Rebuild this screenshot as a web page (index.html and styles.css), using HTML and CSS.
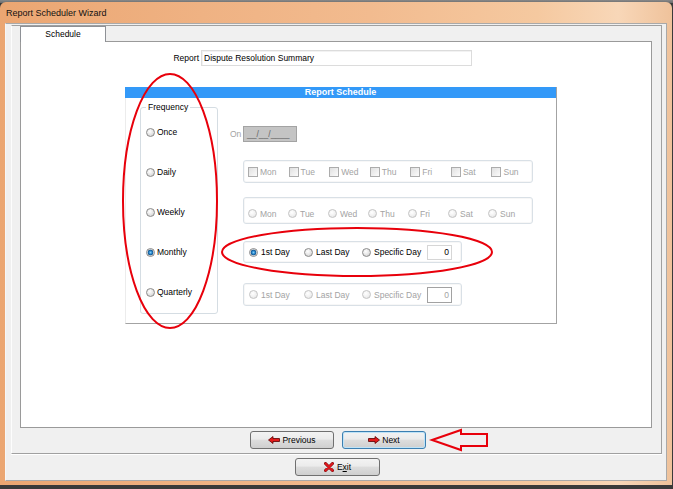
FILE: index.html
```html
<!DOCTYPE html>
<html>
<head>
<meta charset="utf-8">
<title>Report Scheduler Wizard</title>
<link rel="stylesheet" href="styles.css">
</head>
<body>
<div class="window">
  <div class="titlebar">Report Scheduler Wizard</div>
  <div class="client">
    <div class="upper">
      <div class="tabs"><div class="tab">Schedule</div></div>
      <div class="panel">
        <div class="report-row">
          <span class="report-label">Report</span>
          <div class="textbox">Dispute Resolution Summary</div>
        </div>
        <div class="group">
          <div class="group-header">Report Schedule</div>
          <div class="group-body">
            <div class="freq">
              <span class="freq-label">Frequency</span>
              <div class="freq-list">
                <div class="opt"><span class="radio"></span>Once</div>
                <div class="opt"><span class="radio"></span>Daily</div>
                <div class="opt"><span class="radio"></span>Weekly</div>
                <div class="opt"><span class="radio on"></span>Monthly</div>
                <div class="opt"><span class="radio"></span>Quarterly</div>
              </div>
            </div>
            <div class="options">
              <div class="on-row"><span class="on-label">On</span><span class="datebox">__/__/____</span></div>
              <div class="box days">
                <div class="ck-item"><span class="check"></span>Mon</div>
                <div class="ck-item"><span class="check"></span>Tue</div>
                <div class="ck-item"><span class="check"></span>Wed</div>
                <div class="ck-item"><span class="check"></span>Thu</div>
                <div class="ck-item"><span class="check"></span>Fri</div>
                <div class="ck-item"><span class="check"></span>Sat</div>
                <div class="ck-item"><span class="check"></span>Sun</div>
              </div>
              <div class="box weekly">
                <div class="rd-item"><span class="radio dis"></span>Mon</div>
                <div class="rd-item"><span class="radio dis"></span>Tue</div>
                <div class="rd-item"><span class="radio dis"></span>Wed</div>
                <div class="rd-item"><span class="radio dis"></span>Thu</div>
                <div class="rd-item"><span class="radio dis"></span>Fri</div>
                <div class="rd-item"><span class="radio dis"></span>Sat</div>
                <div class="rd-item"><span class="radio dis"></span>Sun</div>
              </div>
              <div class="box monthly">
                <div class="m-item first"><span class="radio on"></span>1st Day</div>
                <div class="m-item last"><span class="radio"></span>Last Day</div>
                <div class="m-item spec"><span class="radio"></span>Specific Day</div>
                <div class="num">0</div>
              </div>
              <div class="box quarterly">
                <div class="m-item first"><span class="radio dis"></span>1st Day</div>
                <div class="m-item last"><span class="radio dis"></span>Last Day</div>
                <div class="m-item spec"><span class="radio dis"></span>Specific Day</div>
                <div class="num">0</div>
              </div>
            </div>
          </div>
        </div>
      </div>
      <div class="nav">
        <div class="btn">
          <svg class="arrow" width="12" height="8" viewBox="0 0 12 8"><polygon points="0.5,4 5,0.5 5,2.5 11.5,2.5 11.5,5.5 5,5.5 5,7.5" fill="#e21b1b" stroke="#5a0000" stroke-width="0.8"/></svg>
          <span>Previous</span>
        </div>
        <div class="btn focus">
          <svg class="arrow" width="12" height="8" viewBox="0 0 12 8"><polygon points="11.5,4 7,0.5 7,2.5 0.5,2.5 0.5,5.5 7,5.5 7,7.5" fill="#e21b1b" stroke="#5a0000" stroke-width="0.8"/></svg>
          <span>Next</span>
        </div>
      </div>
    </div>
    <div class="exit-row">
      <div class="btn exit">
        <svg width="10" height="10" viewBox="0 0 10 10"><path d="M1.5,1.5 L8.5,8.5 M8.5,1.5 L1.5,8.5" stroke="#7a0a0a" stroke-width="3" stroke-linecap="round"/><path d="M1.5,1.5 L8.5,8.5 M8.5,1.5 L1.5,8.5" stroke="#e0191f" stroke-width="1.9" stroke-linecap="round"/></svg>
        <span>E<u>x</u>it</span>
      </div>
    </div>
  </div>
</div>
<svg class="annot" width="673" height="489" viewBox="0 0 673 489">
  <ellipse cx="170" cy="201" rx="47" ry="127" fill="none" stroke="#e8000b" stroke-width="2"/>
  <ellipse cx="357" cy="252" rx="135" ry="24" fill="none" stroke="#e8000b" stroke-width="2"/>
  <polygon points="432,440 461,430 461,434 487,434 487,446 461,446 461,450" fill="none" stroke="#e8000b" stroke-width="2" stroke-linejoin="miter"/>
</svg>
</body>
</html>
```

FILE: styles.css
```css
html, body {
  margin: 0;
  padding: 0;
}
body {
  width: 673px;
  height: 489px;
  overflow: hidden;
  position: relative;
  background: linear-gradient(#8a8a8a 0, #6a6a6a 3px, #3a3a3a 3px);
  font-family: "Liberation Sans", Arial, sans-serif;
  font-size: 8.5px;
  color: #000;
}
.window {
  margin-top: 2px;
  width: 672px;
  height: 483px;
  box-sizing: border-box;
  padding: 0 5px 4px 5px;
  border-radius: 6px 6px 0 0;
  background: linear-gradient(to right, #eba672 0, #efb283 30%, #f2bb8f 55%, #f5c9a0 80%, #f8d7b8 92%, #efc29b 100%);
  display: flex;
  flex-direction: column;
}
.titlebar {
  height: 21px;
  line-height: 22px;
  padding-left: 1px;
  font-size: 9px;
  color: #111;
}
.client {
  width: 662px;
  height: 458px;
  box-sizing: border-box;
  background: #f0f0f0;
  border: 1px solid #a9a9a9;
  border-left-color: #f7f7f7;
}
.upper {
  margin: 1px 0 0 5px;
  width: 651px;
  height: 429px;
  box-sizing: border-box;
  border: 1px solid #a0a0a0;
  border-left-color: #fdfdfd;
  box-shadow: 0 1px 0 #fff;
  padding-left: 8px;
}
.tabs {
  display: flex;
  height: 15px;
  position: relative;
  z-index: 1;
}
.tab {
  width: 86px;
  height: 16px;
  box-sizing: border-box;
  border: 1px solid #8e9196;
  border-bottom: none;
  background: #fff;
  text-align: center;
  line-height: 15px;
}
.panel {
  width: 632px;
  height: 387px;
  box-sizing: border-box;
  border: 1px solid #9a9a9a;
  background: #fff;
}
.report-row {
  display: flex;
  align-items: center;
  margin-top: 8px;
}
.report-label {
  width: 178px;
  text-align: right;
  margin-right: 2px;
}
.textbox {
  width: 271px;
  height: 16px;
  box-sizing: border-box;
  border: 1px solid #dcdcdc;
  box-shadow: inset 1px 1px 0 #f2f2f2;
  padding-left: 2px;
  line-height: 14px;
}
.group {
  margin: 21px 0 0 104px;
  width: 432px;
  height: 237px;
  box-sizing: border-box;
  border-right: 1px solid #a3a3a3;
  border-bottom: 1px solid #a3a3a3;
  border-left: 1px solid #ececec;
}
.group-header {
  margin-left: -1px;
  height: 11px;
  line-height: 11px;
  background: #3399f8;
  color: #fff;
  font-weight: bold;
  font-size: 9px;
  text-align: center;
}
.group-body {
  display: flex;
}
.freq {
  margin: 9px 0 0 14px;
  width: 78px;
  height: 207px;
  box-sizing: border-box;
  border: 1px solid #d5dde3;
  border-radius: 3px;
}
.freq-label {
  display: table;
  margin: -6px 0 0 5px;
  padding: 0 2px;
  background: #fff;
  line-height: 11px;
}
.freq-list {
  display: flex;
  flex-direction: column;
  gap: 26px;
  margin-top: 12px;
  padding-left: 5px;
}
.opt {
  display: flex;
  align-items: center;
  height: 14px;
}
.radio {
  flex: none;
  width: 9px;
  height: 9px;
  box-sizing: border-box;
  border-radius: 50%;
  border: 1px solid #8b8b8b;
  background: radial-gradient(circle at 40% 35%, #ffffff 0, #e6e6e6 50%, #c6c6c6 100%);
  margin-right: 2px;
}
.radio.on {
  background: radial-gradient(circle, #7fd0f8 0, #2a86cc 1.5px, #0e4f86 2.6px, #eeeeee 3.2px, #cfcfcf 100%);
}
.radio.dis {
  border-color: #c4c4c4;
  background: radial-gradient(circle at 40% 35%, #ffffff 0, #f0f0f0 55%, #dcdcdc 100%);
}
.options {
  margin-left: 12px;
  padding-top: 28px;
  display: flex;
  flex-direction: column;
  align-items: flex-start;
}
.on-row {
  display: flex;
  align-items: center;
  height: 16px;
  color: #a3a3a3;
}
.on-label {
  width: 13px;
}
.datebox {
  width: 54px;
  height: 16px;
  box-sizing: border-box;
  background: #c4c4c4;
  border: 1px solid #a3a3a3;
  color: #666;
  line-height: 14px;
  padding-left: 3px;
}
.box {
  margin-left: 13px;
  box-sizing: border-box;
  border: 1px solid #d9e0e6;
  border-radius: 3px;
  box-shadow: inset 0 0 0 1px #f7f7f7;
  display: flex;
  align-items: center;
  padding-left: 4px;
  color: #a3a3a3;
}
.days {
  margin-top: 18px;
  width: 290px;
  height: 23px;
}
.ck-item {
  width: 42px;
  display: flex;
  align-items: center;
}
.check {
  flex: none;
  width: 10px;
  height: 10px;
  box-sizing: border-box;
  border: 1px solid #acacac;
  background: linear-gradient(135deg, #e0e0e0, #fbfbfb);
  margin-right: 2px;
}
.weekly {
  margin-top: 14px;
  width: 290px;
  height: 27px;
  padding-top: 6px;
}
.rd-item {
  width: 40px;
  display: flex;
  align-items: center;
}
.rd-item .radio {
  margin-right: 3px;
}
.monthly {
  margin-top: 17px;
  width: 219px;
  height: 22px;
  padding-left: 5px;
  color: #000;
}
.quarterly {
  margin-top: 20px;
  width: 219px;
  height: 23px;
  padding-left: 5px;
}
.m-item {
  display: flex;
  align-items: center;
}
.m-item .radio {
  margin-right: 3px;
}
.m-item.first { width: 55px; }
.m-item.last { width: 58px; }
.m-item.spec { width: 65px; }
.num {
  width: 25px;
  height: 15px;
  box-sizing: border-box;
  border: 1px solid #d6d6d6;
  text-align: right;
  padding-right: 2px;
  line-height: 13px;
  background: #fff;
}
.quarterly .num {
  border-color: #a2a2a2;
  color: #a3a3a3;
  height: 16px;
  line-height: 14px;
}
.nav {
  display: flex;
  gap: 8px;
  margin-top: 3px;
  padding-left: 230px;
}
.btn {
  width: 84px;
  height: 18px;
  box-sizing: border-box;
  border: 1px solid #707070;
  border-radius: 3px;
  background: linear-gradient(#f3f3f3 0, #ebebeb 45%, #dddddd 50%, #cfcfcf 100%);
  display: flex;
  align-items: center;
  justify-content: center;
  gap: 2px;
  color: #000;
}
.btn.focus {
  border-color: #3c7fb1;
  box-shadow: inset 0 0 0 1px #bfe3f7;
}
.arrow {
  flex: none;
}
.exit-row {
  margin-top: 4px;
  padding-left: 289px;
}
.btn.exit {
  width: 85px;
  gap: 3px;
}
.annot {
  position: absolute;
  left: 0;
  top: 0;
  pointer-events: none;
}
```
